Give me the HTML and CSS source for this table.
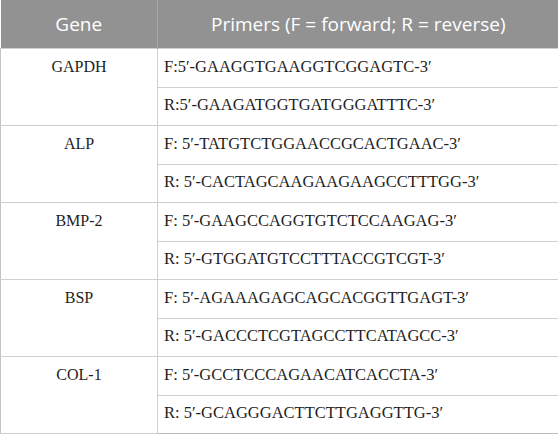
FILE: index.html
```html
<!DOCTYPE html>
<html>
<head>
<meta charset="utf-8">
<link rel="stylesheet" href="styles.css">
</head>
<body>
<table class="primers">
  <colgroup><col class="col-gene"><col class="col-seq"></colgroup>
  <thead>
    <tr><th>Gene</th><th>Primers (F = forward; R = reverse)</th></tr>
  </thead>
  <tbody>
    <tr><td class="gene" rowspan="2">GAPDH</td><td class="seq">F:5′-GAAGGTGAAGGTCGGAGTC-3′</td></tr>
    <tr><td class="seq">R:5′-GAAGATGGTGATGGGATTTC-3′</td></tr>
    <tr><td class="gene" rowspan="2">ALP</td><td class="seq">F: 5′-TATGTCTGGAACCGCACTGAAC-3′</td></tr>
    <tr><td class="seq">R: 5′-CACTAGCAAGAAGAAGCCTTTGG-3′</td></tr>
    <tr><td class="gene" rowspan="2">BMP-2</td><td class="seq">F: 5′-GAAGCCAGGTGTCTCCAAGAG-3′</td></tr>
    <tr><td class="seq">R: 5′-GTGGATGTCCTTTACCGTCGT-3′</td></tr>
    <tr><td class="gene" rowspan="2">BSP</td><td class="seq">F: 5′-AGAAAGAGCAGCACGGTTGAGT-3′</td></tr>
    <tr><td class="seq">R: 5′-GACCCTCGTAGCCTTCATAGCC-3′</td></tr>
    <tr><td class="gene" rowspan="2">COL-1</td><td class="seq">F: 5′-GCCTCCCAGAACATCACCTA-3′</td></tr>
    <tr><td class="seq">R: 5′-GCAGGGACTTCTTGAGGTTG-3′</td></tr>
  </tbody>
</table>
</body>
</html>
```

FILE: styles.css
```css
html, body {
  margin: 0;
  padding: 0;
  background: #ffffff;
}

.primers {
  width: 558px;
  table-layout: fixed;
  border-collapse: collapse;
  font-family: "Liberation Serif", "Times New Roman", serif;
  font-size: 16px;
  color: #1e1e1e;
}

.col-gene { width: 157px; }
.col-seq { width: 401px; }

.primers thead th {
  height: 48px;
  padding: 0;
  background: #929292;
  color: #ffffff;
  font-family: "Open Sans", "Noto Sans", sans-serif;
  font-weight: 400;
  font-size: 19px;
  text-align: center;
  vertical-align: middle;
  border-left: 1px solid #a8a8a8;
}

.primers thead th:first-child {
  border-left: none;
}

.primers tbody tr {
  height: 38.5px;
}

.primers td {
  padding: 0;
  border: 1px solid #cfcfcf;
}

.primers tbody tr:last-child td {
  border-bottom-color: #bdbdbd;
}

.primers td.gene {
  text-align: center;
  vertical-align: top;
  line-height: 36px;
  font-size: 16px;
  border-left: 1px solid #c4c4c4;
}

.primers td.seq {
  text-align: left;
  vertical-align: middle;
  padding-left: 6px;
  padding-bottom: 2px;
  font-size: 16.5px;
  border-right: 1px solid #c4c4c4;
}
```
